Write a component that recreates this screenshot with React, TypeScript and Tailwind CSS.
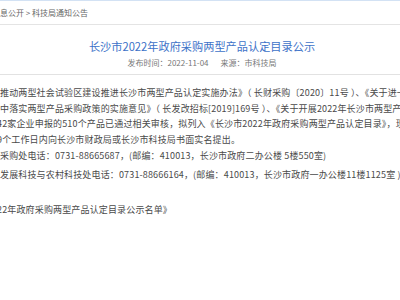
export default function App() {
  return (
    <div className="w-[400px] h-[300px] overflow-hidden bg-white border-t border-[#d3e2f4] font-['Noto_Sans_CJK_SC','Noto_Sans',sans-serif]">
      {/* breadcrumb */}
      <div className="h-[24px] flex items-center whitespace-nowrap text-[8px] text-[#666] border-b border-[#e4e4e4]">
        <span>息公开 &gt; 科技局通知公告</span>
      </div>

      {/* title block */}
      <div className="pt-[13px] pb-[5px] border-b border-[#e2e2e2] text-center pl-[4px]">
        <h1 className="text-[11.2px] leading-[16px] text-[#3d72c8] whitespace-nowrap">
          长沙市2022年政府采购两型产品认定目录公示
        </h1>
        <div className="mt-[3px] text-[8px] leading-[12px] text-[#777] whitespace-nowrap flex justify-center gap-[12px]">
          <span>发布时间：2022-11-04</span>
          <span>来源：市科技局</span>
        </div>
      </div>

      {/* article body */}
      <div className="pt-[10px] text-[9px] tracking-[0.15px] text-[#4a4a4a] whitespace-nowrap">
        <div className="leading-[15.7px]">
          <p>推动两型社会试验区建设推进长沙市两型产品认定实施办法》（ 长财采购〔2020〕11号 ）、《关于进一步</p>
          <p>中落实两型产品采购政策的实施意见》（ 长发改招标[2019]169号 ）、《关于开展2022年长沙市两型产品认定</p>
          <p className="-ml-[3px]">42家企业申报的510个产品已通过相关审核，拟列入《长沙市2022年政府采购两型产品认定目录》，现予公示</p>
          <p className="-ml-[3px]">9个工作日内向长沙市财政局或长沙市科技局书面实名提出。</p>
          <p>采购处电话：0731-88665687，(邮编：410013，长沙市政府二办公楼 5楼550室)</p>
        </div>
        <p className="mt-[3px] leading-[15.7px]">发展科技与农村科技处电话：0731-88666164，(邮编：410013，长沙市政府一办公楼11楼1125室 )</p>
        <p className="mt-[20px] leading-[15.7px] -ml-[3px]">22年政府采购两型产品认定目录公示名单》</p>
      </div>
    </div>
  )
}
